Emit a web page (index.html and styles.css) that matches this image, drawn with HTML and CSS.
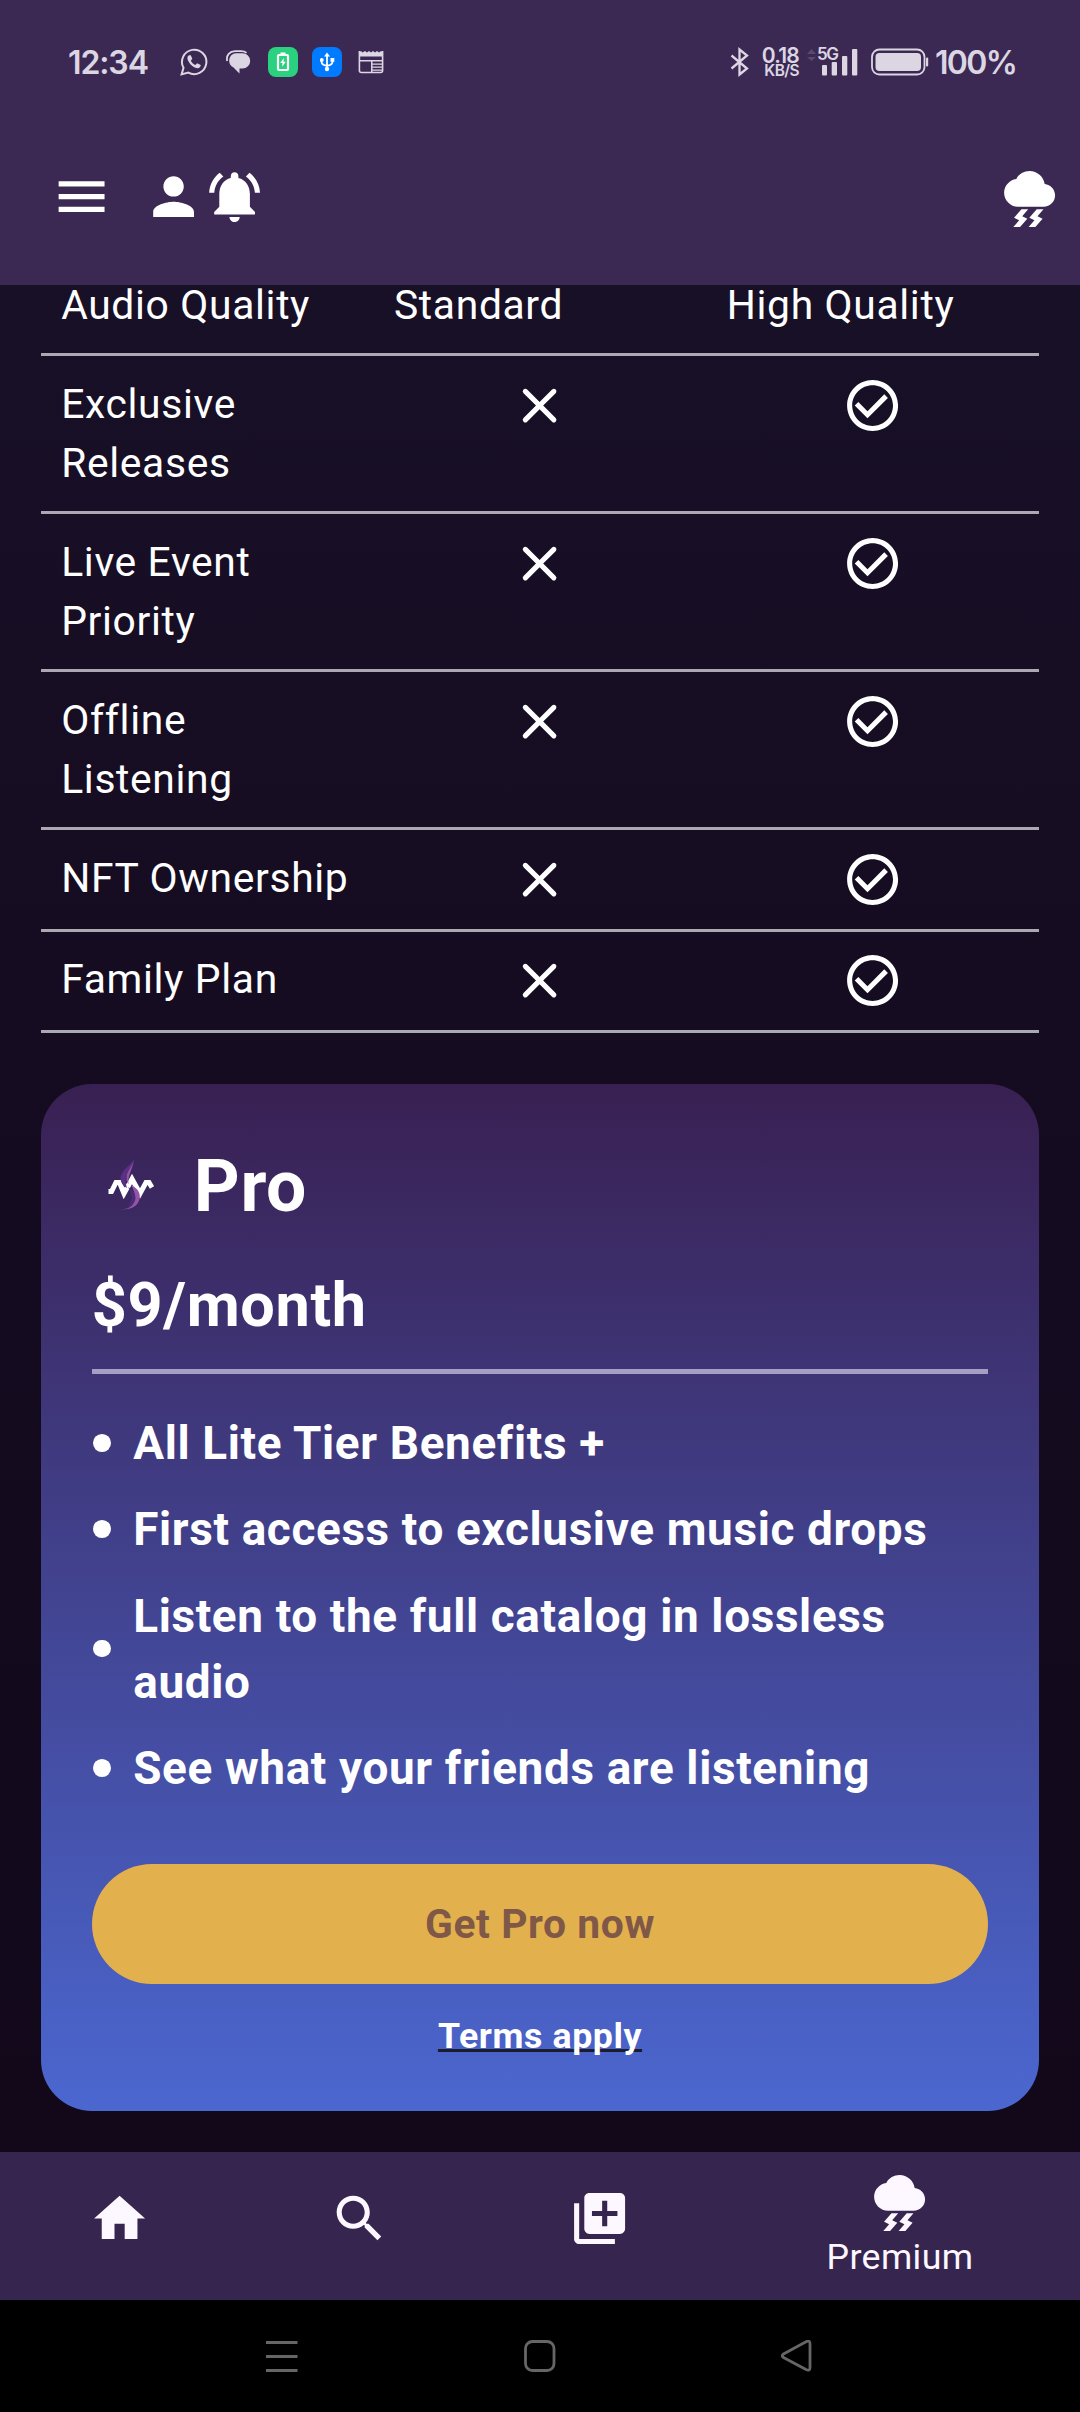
FILE: index.html
```html
<!DOCTYPE html>
<html lang="en">
<head>
<meta charset="utf-8">
<title>Premium</title>
<link rel="stylesheet" href="styles.css">
</head>
<body>
<svg class="defs" width="0" height="0">
  <symbol id="storm" viewBox="0 0 24 24"><path d="M17.92 7.02C17.45 4.18 14.97 2 12 2 9.82 2 7.83 3.18 6.78 5.06 4.09 5.41 2 7.74 2 10.5 2 13.53 4.47 16 7.5 16h10c2.48 0 4.5-2.02 4.5-4.5 0-2.34-1.79-4.27-4.08-4.48zM14.8 17l-2.9 3.32 2 1L11.55 24h2.65l2.9-3.32-2-1L17.45 17zm-6 0l-2.9 3.32 2 1L5.55 24H8.2l2.9-3.32-2-1L11.45 17z"/></symbol>
  <symbol id="close" viewBox="0 0 24 24"><path d="M18.3 5.71a.996.996 0 0 0-1.41 0L12 10.59 7.11 5.7A.996.996 0 1 0 5.7 7.11L10.59 12 5.7 16.89a.996.996 0 1 0 1.41 1.41L12 13.41l4.89 4.89a.996.996 0 1 0 1.41-1.41L13.41 12l4.89-4.89c.38-.38.38-1.02 0-1.4z"/></symbol>
  <symbol id="check" viewBox="0 0 24 24"><path d="M12 2C6.48 2 2 6.48 2 12s4.48 10 10 10 10-4.48 10-10S17.52 2 12 2zm0 18c-4.41 0-8-3.59-8-8s3.59-8 8-8 8 3.59 8 8-3.59 8-8 8zm4.59-12.42L10 14.17l-3.59-3.58L5 12l5 5 8-8z"/></symbol>
</svg>

<header class="top">
  <div class="status">
    <span class="time">12:34</span>
    <svg class="st-wa" width="28" height="28" viewBox="0 0 28 28" fill="none" stroke="#dcd6e3" stroke-width="2"><path d="M1.600 26.400l1.900-6.600A12.200 12.200 0 1 1 8.300 24.600z"/><path d="M9 7.200c-2 1-2 3.500-.6 6 2 3.800 5.400 6.600 8.800 7.100 2 .2 3.500-1.200 3.500-3.200l-3.500-1.900-1.900 1.800c-2-.8-3.600-2.400-4.500-4.300l1.500-1.900-1.500-3.600z" fill="#dcd6e3" stroke="none"/></svg>
    <svg class="st-chat" width="25" height="24" viewBox="0 0 25 24"><path d="M1.200 11C-.2 5 4 1.400 9 1.200h6c2.500 0 4.200.6 5.500 1.700" fill="none" stroke="#dcd6e3" stroke-width="1.800"/><path d="M10 3.200h6.500a7.700 7.700 0 0 1 0 15.400H13.500V23.500L7 17C1 14 2.500 3.500 10 3.200z" fill="#dcd6e3"/></svg>
    <svg class="st-batt" width="30" height="30" viewBox="0 0 30 30"><rect width="30" height="30" rx="8" fill="#2ad17e"/><rect x="10" y="8" width="10" height="15" rx="1" fill="none" stroke="#fff" stroke-width="2.200"/><rect x="12.500" y="5.500" width="5" height="2.500" fill="#fff"/><path d="M15.800 11l-3.600 5h2.300l-.4 3.700 3.700-5h-2.300z" fill="#fff"/></svg>
    <svg class="st-usb" width="30" height="30" viewBox="0 0 30 30"><rect width="30" height="30" rx="8" fill="#007bff"/><g stroke="#fff" stroke-width="1.800" fill="none"><path d="M15 8v14M9.500 13v1.500c0 2.500 2.500 4 5.500 4s5.500-1.500 5.500-4V13"/></g><path d="M12 9.500L15 5.500l3 4z" fill="#fff"/><circle cx="9.800" cy="13" r="1.900" fill="#fff"/><path d="M18.500 11h3.800v3.800h-3.800z" fill="#fff"/><circle cx="15" cy="22" r="2.200" fill="#fff"/></svg>
    <svg class="st-news" width="26" height="24" viewBox="0 0 26 24"><path d="M1.400 1v19.500q0 2 2 2h19.200q2 0 2-2V1" fill="none" stroke="#dcd6e3" stroke-width="1.600"/><path d="M1 2.500l2-1.500 1.500 1.500L7 1l2 1.500L11 1l2 1.500L15 1l2 1.500L19 1l2 1.500L23 1l2 1.500V6.500H1zM1 10h24v1.400H1zM13 11h1.500v11H13zM14 13.500h10v1.200H14zM14 16.500h10v1.200H14zM14 19.500h10v1.200H14z" fill="#dcd6e3"/></svg>
    <svg class="st-bt" width="20" height="30" viewBox="0 0 20 30" fill="none" stroke="#dcd6e3" stroke-width="2.300"><path d="M1.500 8.500L17 21.500 9.500 27.500V2.500L17 8.500 1.500 21.500"/></svg>
    <span class="rate"><b>0.18</b><i>KB/S</i></span>
    <span class="signal"><em>5G</em>
      <svg width="52" height="28" viewBox="0 0 52 28"><path d="M0 6l4.500-5L9 6zM0 9l4.500 4L9 9z" fill="#584a6c"/><g fill="#dcd6e3"><rect x="15" y="17" width="5" height="10.500" rx="1"/><rect x="24.700" y="14" width="5.300" height="13.500" rx="1"/><rect x="35" y="8" width="5.300" height="19.500" rx="1"/><rect x="45" y="1" width="5.300" height="26.500" rx="1"/></g></svg></span>
    <svg class="st-power" width="58" height="28" viewBox="0 0 58 28"><rect x="1" y="1.500" width="52.500" height="25" rx="7.500" fill="none" stroke="#dcd6e3" stroke-width="1.800"/><rect x="4.500" y="5" width="45.500" height="18" rx="4" fill="#dcd6e3"/><rect x="55" y="9.500" width="2.200" height="9" rx="1" fill="#dcd6e3"/></svg>
    <span class="pct">100%</span>
  </div>
  <div class="appbar">
    <svg class="icon" viewBox="0 0 24 24"><path d="M3 18h18v-2H3v2zm0-5h18v-2H3v2zm0-7v2h18V6H3z"/></svg>
    <svg class="icon person" viewBox="0 0 24 24"><path d="M12 12c2.210 0 4-1.790 4-4s-1.790-4-4-4-4 1.790-4 4 1.790 4 4 4zm0 2c-2.670 0-8 1.340-8 4v2h16v-2c0-2.660-5.330-4-8-4z"/></svg>
    <svg class="icon" viewBox="0 0 24 24"><path d="M7.580 4.080L6.150 2.650C3.750 4.480 2.170 7.300 2.030 10.500h2c.15-2.650 1.510-4.970 3.550-6.420zm12.390 6.420h2c-.15-3.200-1.730-6.020-4.120-7.850l-1.420 1.430c2.020 1.450 3.390 3.770 3.540 6.420zM18 11c0-3.070-1.640-5.640-4.500-6.320V4c0-.83-.67-1.500-1.500-1.500s-1.500.67-1.500 1.500v.68C7.630 5.360 6 7.920 6 11v5l-2 2v1h16v-1l-2-2v-5zm-6 11c.14 0 .27-.01.4-.04.65-.14 1.180-.58 1.440-1.180.1-.24.15-.5.15-.78h-4c.01 1.100.9 2 2.010 2z"/></svg>
    <svg class="icon storm"><use href="#storm"/></svg>
  </div>
</header>

<main class="page">
  <section class="compare">
    <div class="row first"><div>Audio Quality</div><div>Standard</div><div>High Quality</div></div>
    <div class="row"><div>Exclusive Releases</div><div class="mark"><svg class="icon"><use href="#close"/></svg></div><div class="mark"><svg class="icon"><use href="#check"/></svg></div></div>
    <div class="row"><div>Live Event Priority</div><div class="mark"><svg class="icon"><use href="#close"/></svg></div><div class="mark"><svg class="icon"><use href="#check"/></svg></div></div>
    <div class="row"><div>Offline Listening</div><div class="mark"><svg class="icon"><use href="#close"/></svg></div><div class="mark"><svg class="icon"><use href="#check"/></svg></div></div>
    <div class="row"><div>NFT Ownership</div><div class="mark"><svg class="icon"><use href="#close"/></svg></div><div class="mark"><svg class="icon"><use href="#check"/></svg></div></div>
    <div class="row"><div>Family Plan</div><div class="mark"><svg class="icon"><use href="#close"/></svg></div><div class="mark"><svg class="icon"><use href="#check"/></svg></div></div>
  </section>

  <section class="card">
    <div class="brand">
      <svg class="logo" width="46" height="52" viewBox="0 0 46 52"><path d="M.5 32.500h3L8 23.500h3.500L16 34.500 24 20l8 14.500L38 23.500h3l3 5" fill="none" stroke="#fff" stroke-width="5"/><path d="M26.500 0C21 8 12 12 12.500 20c.3 4 2.500 7 6.500 9-2-6-2-10 1-16 2.500-4.500 5-8 6.500-13z" fill="#5b2f86"/><path d="M26 1c-2 7-7 11-7.500 17 0 4 .5 5 2 7-1-8 3.500-13 5.500-24z" fill="#8f55a3"/><path d="M23 26c8 4 9.500 9 8.500 14-1.500 7-8 11-19.500 10.500 9-.5 13-3 14.500-9C27.500 36 26 31 23 26z" fill="#9355a5"/><path d="M20 28c5 3 7.500 7 7.500 11-.5 5-4 8.500-9 10.500 6-6 7-13 1.500-21.500z" fill="#4b2c7a"/></svg>
      <h2>Pro</h2>
    </div>
    <p class="price">$9/month</p>
    <hr>
    <ul>
      <li><span>All Lite Tier Benefits +</span></li>
      <li><span>First access to exclusive music drops</span></li>
      <li><span>Listen to the full catalog in lossless audio</span></li>
      <li><span>See what your friends are listening</span></li>
    </ul>
    <button type="button">Get Pro now</button>
    <a class="terms">Terms apply</a>
  </section>
</main>

<nav class="tabs">
  <div class="tab"><svg class="icon" viewBox="0 0 24 24"><path d="M10 20v-6h4v6h5v-8h3L12 3 2 12h3v8z"/></svg></div>
  <div class="tab"><svg class="icon" viewBox="0 0 24 24"><path d="M15.500 14h-.79l-.28-.27C15.410 12.590 16 11.110 16 9.500 16 5.910 13.090 3 9.500 3S3 5.910 3 9.500 5.910 16 9.500 16c1.610 0 3.090-.59 4.230-1.570l.27.28v.79l5 4.990L20.490 19l-4.990-5zm-6 0C7.010 14 5 11.990 5 9.500S7.010 5 9.500 5 14 7.010 14 9.500 11.990 14 9.500 14z"/></svg></div>
  <div class="tab"><svg class="icon" viewBox="0 0 24 24"><path d="M4 6H2v14c0 1.100.9 2 2 2h14v-2H4V6zm16-4H8c-1.100 0-2 .9-2 2v12c0 1.100.9 2 2 2h12c1.100 0 2-.9 2-2V4c0-1.100-.9-2-2-2zm-1 9h-4v4h-2v-4H9V9h4V5h2v4h4v2z"/></svg></div>
  <div class="tab active"><svg class="icon"><use href="#storm"/></svg><span>Premium</span></div>
</nav>

<footer class="sysnav">
  <svg width="32" height="32" viewBox="0 0 32 32"><path d="M0 2.500h31.500M0 16.500h31.500M0 30.500h31.500"/></svg>
  <svg width="32" height="32" viewBox="0 0 32 32"><rect x="1.500" y="1.500" width="28.500" height="29" rx="7"/></svg>
  <svg width="32" height="32" viewBox="0 0 32 32"><path d="M2.500 14L25 1.700q4-1.700 4 2V27.500q0 4-4 2L2.500 17.500q-2.500-1.700 0-3.500z"/></svg>
</footer>
</body>
</html>
```

FILE: styles.css
```css
* { box-sizing: border-box; }

body {
  margin: 0;
  width: 1080px;
  height: 2412px;
  display: flex;
  flex-direction: column;
  overflow: hidden;
  font-family: Roboto, sans-serif;
  color: #fff;
  background: #000;
}

.defs { display: none; }

.icon {
  width: 61.2px;
  height: 61.2px;
  flex: none;
  display: block;
  fill: currentColor;
}

/* Top area */
.top {
  height: 285px;
  flex: none;
  background: #3b2954;
}

.status {
  height: 108px;
  padding: 16px 0 0 68px;
  display: flex;
  align-items: center;
  font-family: Inter, sans-serif;
  font-weight: 600;
  color: #dcd6e3;
  white-space: nowrap;
}

.status svg { flex: none; display: block; }
.time { width: 112px; font-size: 32px; letter-spacing: -1.1px; }
.st-chat { margin-left: 18px; }
.st-batt { margin-left: 17px; }
.st-usb { margin-left: 14px; }
.st-news { margin-left: 16px; }
.st-bt { margin-left: 346px; }
.rate { width: 36px; margin-left: 13px; display: flex; flex-direction: column; align-items: flex-end; }
.rate b { font: 600 21px/17px Inter, sans-serif; letter-spacing: -0.8px; }
.rate i { font: 600 15.5px/14px Inter, sans-serif; letter-spacing: -0.6px; }
.signal { position: relative; margin-left: 8px; }
.signal em {
  position: absolute;
  left: 10px;
  top: -1px;
  font: 600 17px/15px Inter, sans-serif;
  letter-spacing: -1.4px;
  background: #3b2954;
}
.st-power { margin-left: 12px; }
.pct { margin-left: 6px; font-size: 32px; letter-spacing: -1.7px; }

.appbar {
  height: 177px;
  padding: 0 20px 0 51px;
  display: flex;
  align-items: center;
}

.person { margin-left: 30.6px; }
.storm { margin-left: auto; }

/* Scrolling content */
.page {
  height: 1867px;
  flex: none;
  padding: 0 40.8px;
  overflow: hidden;
  background: linear-gradient(#181027, #150b20 50%, #12081a);
}

.row {
  display: grid;
  grid-template-columns: repeat(3, 1fr);
  padding: 18.7px 0 18.4px;
  border-bottom: 3px solid #aba8b3;
  font-size: 40.8px;
  line-height: 59px;
  letter-spacing: 0.65px;
}

.row > div { padding: 0 20.4px; }
.row.first { padding-top: 0; margin-top: -9.4px; }
.row > .mark { display: flex; justify-content: center; }

.card {
  margin-top: 51.3px;
  height: 1027.2px;
  padding: 51px;
  border-radius: 51px;
  background: linear-gradient(#392052, #4b67d0);
  display: flex;
  flex-direction: column;
  font-weight: 700;
}

.brand { display: flex; align-items: center; height: 104px; flex: none; }
.logo { margin: -5px 0 0 16px; }
.brand h2 { margin: 0 0 0 40px; font-size: 71.4px; line-height: 102px; font-weight: 700; letter-spacing: 0.6px; }
.price { margin: 20.4px 0 0; font-size: 61.2px; line-height: 92px; letter-spacing: 0.65px; }
hr { width: 100%; margin: 17.6px 0 35.6px; border: 0; height: 5.1px; flex: none; background: #a59fc3; }

ul { list-style: none; margin: 0; padding: 0; display: grid; gap: 20.4px; }
li {
  display: flex;
  align-items: center;
  gap: 22.6px;
  font-size: 45.9px;
  line-height: 66px;
  letter-spacing: 0.64px;
}
li::before { content: ""; width: 17.8px; height: 17.8px; flex: none; border-radius: 50%; background: #fff; margin-left: 1px; }

button {
  margin: 63.5px 0 0;
  padding: 0;
  height: 119.8px;
  flex: none;
  border: 0;
  border-radius: 60px;
  background: #e3b04e;
  color: #7f5848;
  font: 700 40.8px/58px Roboto, sans-serif;
  letter-spacing: 0.6px;
}

.terms {
  align-self: center;
  margin-top: 26.5px;
  font-size: 35.7px;
  line-height: 51px;
  letter-spacing: 0.6px;
  text-decoration: underline #1d1b2e 2.5px;
  text-decoration-skip-ink: none;
  text-underline-offset: 1px;
}

/* Bottom navigation */
.tabs {
  height: 148px;
  flex: none;
  display: grid;
  grid-template-columns: 240px 240px 240px 360px;
  background: #36254f;
  color: #fdf7ff;
}

.tab { display: flex; flex-direction: column; align-items: center; padding-top: 36px; }
.tab.active { padding-top: 18px; font-size: 35.7px; line-height: 52px; letter-spacing: 0.4px; }

.sysnav {
  height: 112px;
  display: flex;
  justify-content: space-between;
  align-items: center;
  padding: 0 267px 0 266px;
}

.sysnav svg { fill: none; stroke: #666; stroke-width: 2.8; }
```
